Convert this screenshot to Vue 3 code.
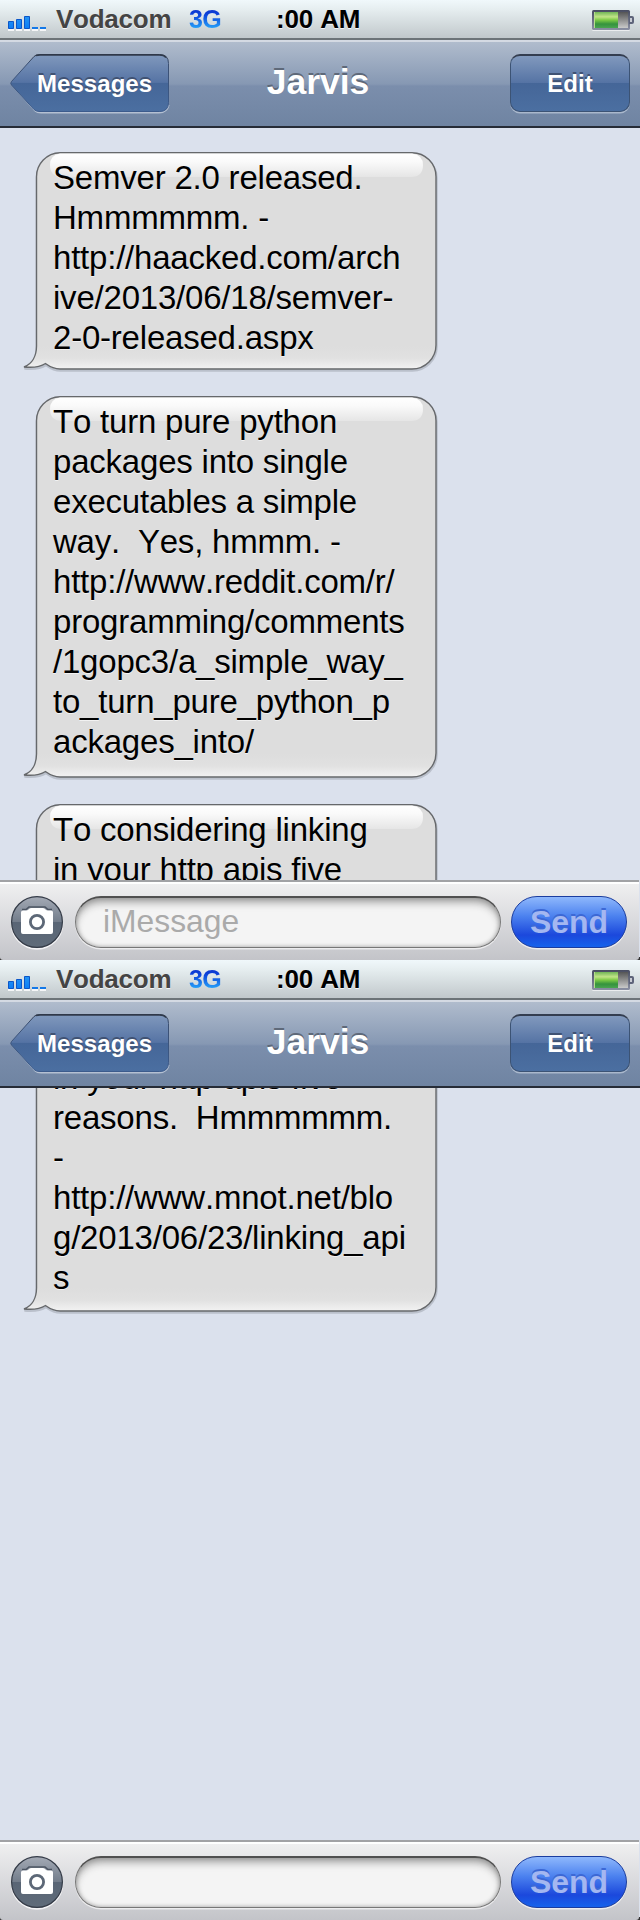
<script setup>
const semver = {
  height: 218,
  lines: ['Semver 2.0 released.', 'Hmmmmmm. -', 'http://haacked.com/arch', 'ive/2013/06/18/semver-', '2-0-released.aspx'],
}
const python = {
  height: 382,
  lines: [
    'To turn pure python',
    'packages into single',
    'executables a simple',
    'way.  Yes, hmmm. -',
    'http://www.reddit.com/r/',
    'programming/comments',
    '/1gopc3/a_simple_way_',
    'to_turn_pure_python_p',
    'ackages_into/',
  ],
}
// The long message is split over both screens: each one lists the lines it can show
const linkingStart = {
  height: 300,
  lines: ['To considering linking', 'in your http apis five'],
}
const linkingEnd = {
  height: 300,
  lines: [
    'in your http apis five',
    'reasons.  Hmmmmmm.',
    '-',
    'http://www.mnot.net/blo',
    'g/2013/06/23/linking_api',
    's',
  ],
}

const screens = [
  { id: 'a', messages: [semver, python, linkingStart], placeholder: 'iMessage', scrolled: false },
  { id: 'b', messages: [linkingEnd], placeholder: '', scrolled: true },
]

// Bubble outline with the tail at the lower left
function outline(h) {
  return `M40 .7 H392 A24 24 0 0 1 416 25 V${h - 25} A24 24 0 0 1 392 ${h - 1} H40 C33 ${h - 1} 29 ${h - 4} 25.5 ${h - 6.5} C21 ${h - 3.5} 14 ${h - 2} 4 ${h - 3} C12 ${h - 6} 16.5 ${h - 14} 16.5 ${h - 24} V25 A24 24 0 0 1 40 .7 Z`
}
</script>

<template>
  <main class="page">
    <section v-for="s in screens" :key="s.id" class="screen">
      <header class="status">
        <svg class="signal" width="40" height="20" viewBox="0 0 40 20">
          <defs>
            <linearGradient :id="'sig' + s.id" x1="0" y1="0" x2="0" y2="1">
              <stop offset="0" stop-color="#2494f4" /><stop offset="1" stop-color="#0c7df5" />
            </linearGradient>
          </defs>
          <path d="M0 16h6v2H0zM8 16h6v2H8zM16 16h6v2H16zM24 16h6v2H24zM32 16h6v2H32z" fill="#fff" opacity=".8" />
          <g :fill="`url(#sig${s.id})`" stroke="#0b56c8">
            <path d="M.5 8.500h5v7H.5zM8.500 6.500h5v9h-5zM16.500 3.500h5v12h-5z" />
          </g>
          <path d="M24 14h6v2H24zM32 14h6v2H32z" fill="#1479e8" />
        </svg>
        <span class="carrier">Vodacom</span>
        <span class="network">3G</span>
        <span class="clock">:00 AM</span>
        <svg class="battery" width="44" height="24" viewBox="0 0 44 24">
          <defs>
            <linearGradient :id="'cell' + s.id" x1="0" y1="0" x2="0" y2="1">
              <stop offset="0" stop-color="#71b657" /><stop offset=".3" stop-color="#c1e487" />
              <stop offset=".5" stop-color="#7cca45" /><stop offset=".75" stop-color="#35933d" /><stop offset="1" stop-color="#49a451" />
            </linearGradient>
            <linearGradient :id="'void' + s.id" x1="0" y1="0" x2="0" y2="1">
              <stop offset="0" stop-color="#555" /><stop offset="1" stop-color="#c9c9c9" />
            </linearGradient>
            <linearGradient :id="'case' + s.id" x1="0" y1="0" x2="0" y2="1">
              <stop offset="0" stop-color="#484c60" /><stop offset="1" stop-color="#8b90a3" />
            </linearGradient>
          </defs>
          <rect x="0" y="2" width="38" height="20" rx="1.500" fill="#fff" opacity=".6" />
          <rect x="0" y="1" width="38" height="20" rx="1.500" :fill="`url(#case${s.id})`" />
          <path d="M37 7h3q2 0 2 2v4q0 2-2 2h-3z" fill="#5e647a" />
          <path d="M38 9h2v4h-2z" fill="#c9ccd4" />
          <rect x="2" y="3" width="24" height="16" :fill="`url(#cell${s.id})`" />
          <path d="M2.500 3v16" stroke="#b5dd8c" />
          <rect x="26" y="3" width="10" height="16" :fill="`url(#void${s.id})`" />
        </svg>
      </header>

      <nav class="nav">
        <div class="back">
          <svg class="back-shape" width="162" height="64" viewBox="0 0 162 64">
            <defs>
              <linearGradient :id="'btn' + s.id" x1="0" y1="0" x2="0" y2="1">
                <stop offset="0" stop-color="#8199bd" /><stop offset=".49" stop-color="#5573a4" />
                <stop offset=".5" stop-color="#456698" /><stop offset="1" stop-color="#4b6fa1" />
              </linearGradient>
              <linearGradient :id="'edge' + s.id" x1="0" y1="0" x2="0" y2="1">
                <stop offset="0" stop-color="#303a4b" /><stop offset=".15" stop-color="#3c5072" /><stop offset="1" stop-color="#3c5b8c" />
              </linearGradient>
            </defs>
            <path d="M2 30.500L25 56.700Q27 58.700 31 58.700H149Q157 58.700 159 51" fill="none" stroke="#b4c0d2" stroke-width="1.400" />
            <path d="M24 2.500Q26 .5 30 .5H149.500Q158.500 .5 158.500 9.500V48.500Q158.500 57.500 149.500 57.500H30Q26 57.500 24 55.500L1.500 31Q0 29.500 1.500 27.500Z" :fill="`url(#btn${s.id})`" :stroke="`url(#edge${s.id})`" />
            <path d="M26 1.500Q28 1 30 1H149.500Q154 1 156 3.500" fill="none" stroke="#303a4b" stroke-width="1.500" />
          </svg>
          <span class="back-label">Messages</span>
        </div>
        <h1 class="title">Jarvis</h1>
        <div class="edit">Edit</div>
      </nav>

      <div class="feed">
        <div class="thread" :class="{ scrolled: s.scrolled }">
          <article v-for="(m, i) in s.messages" :key="i" class="bubble" :style="{ height: m.height + 'px' }">
            <svg class="bubble-shape" width="424" :height="m.height + 6" :viewBox="`0 0 424 ${m.height + 6}`">
              <defs>
                <linearGradient :id="`body${s.id}${i}`" gradientUnits="userSpaceOnUse" x1="0" :y1="m.height - 24" x2="0" :y2="m.height">
                  <stop offset="0" stop-color="#ddd" /><stop offset=".5" stop-color="#e1e1e1" /><stop offset="1" stop-color="#f4f4f4" />
                </linearGradient>
                <linearGradient :id="`gloss${s.id}${i}`" x1="0" y1="0" x2="0" y2="1">
                  <stop offset="0" stop-color="#fff" /><stop offset=".35" stop-color="#fff" stop-opacity=".85" /><stop offset="1" stop-color="#fff" stop-opacity=".25" />
                </linearGradient>
              </defs>
              <path :d="outline(m.height)" transform="translate(0.5 1.5)" fill="none" stroke="#8a8f99" stroke-opacity=".4" stroke-width="2.500" />
              <path :d="outline(m.height)" :fill="`url(#body${s.id}${i})`" stroke="#66686b" stroke-width="1.400" />
              <path d="M40 1.500H392Q403 3 403 13Q403 25 391 25H42Q30 25 30 13Q30 3 40 1.500Z" :fill="`url(#gloss${s.id}${i})`" />
            </svg>
            <div class="text"><div v-for="(line, n) in m.lines" :key="n">{{ line }}</div></div>
          </article>
        </div>
      </div>

      <footer class="composer">
        <svg class="camera" width="54" height="56" viewBox="0 0 54 56">
          <defs>
            <linearGradient :id="'cam' + s.id" x1="0" y1="0" x2="0" y2="1">
              <stop offset="0" stop-color="#a4aab5" /><stop offset=".49" stop-color="#737d8b" />
              <stop offset=".5" stop-color="#596575" /><stop offset="1" stop-color="#5f6b79" />
            </linearGradient>
          </defs>
          <circle cx="26" cy="27.500" r="25.500" fill="none" stroke="#f3f3f5" stroke-width="1.500" />
          <circle cx="26" cy="26" r="25.400" :fill="`url(#cam${s.id})`" stroke="#343b47" stroke-width="1.200" />
          <path d="M11 13.500H15L18 11H34L37 13.500H41" fill="none" stroke="#4c5563" stroke-width="1.500" />
          <path d="M12 14.500H15Q16.500 14.500 17.500 13.500L18 13Q19 12 20.500 12H31.500Q33 12 34 13L34.500 13.500Q35.500 14.500 37 14.500H40Q42 14.500 42 16.500V36Q42 38 40 38H12Q10 38 10 36V16.500Q10 14.500 12 14.500Z" fill="#fff" />
          <circle cx="26" cy="26" r="6.600" fill="#fff" stroke="#5d6877" stroke-width="2.800" />
        </svg>
        <div class="field">{{ s.placeholder }}</div>
        <div class="send">Send</div>
      </footer>
    </section>
  </main>
</template>

<style>
body {
  margin: 0;
}
</style>

<style scoped>
.page {
  width: 640px;
  font-family: 'Liberation Sans', Arial, sans-serif;
  font-kerning: none;
}
.screen {
  display: flex;
  flex-direction: column;
  width: 640px;
  height: 960px;
  overflow: hidden;
  background: linear-gradient(#dbe1ed 957px, #333 957px);
}
.status {
  box-sizing: border-box;
  display: flex;
  flex: none;
  height: 40px;
  padding-left: 8px;
  background: linear-gradient(#f0f8fb 0, #e5edef 10px, #c1c8cb 38px);
  border-bottom: 2px solid #6d7478;
  font-weight: bold;
  font-size: 26px;
  line-height: 38px;
  white-space: pre;
}
.signal {
  margin-top: 13px;
}
.carrier {
  width: 133px;
  margin-left: 8px;
  color: #444;
  letter-spacing: -0.25px;
  text-shadow: 0 1px #f4f6f7;
}
.network {
  width: 90px;
  color: transparent;
  font-size: 25px;
  letter-spacing: -0.7px;
  background: linear-gradient(#0c36cf 10px, #0d46dc 15px, #28a6fa 29px);
  -webkit-background-clip: text;
  background-clip: text;
}
.clock {
  width: 315px;
  margin-left: -3px;
  color: #000;
  letter-spacing: -0.15px;
  text-shadow: 0 1px #f4f6f7;
}
.battery {
  margin-top: 9px;
  margin-left: 1px;
}
.nav {
  box-sizing: border-box;
  display: flex;
  flex: none;
  height: 88px;
  padding: 12px 10px 0;
  background: linear-gradient(#b0bccd 0, #8698b3 42px, #7b8eac 44px, #6f84a2 84px);
  border-top: 2px solid #d4dae3;
  border-bottom: 2px solid #262c37;
  color: #fff;
  font-weight: bold;
}
.back {
  position: relative;
  width: 159px;
  height: 58px;
}
.back-shape {
  position: absolute;
  top: 0;
  left: 0;
}
.back-label {
  position: relative;
  display: block;
  padding-left: 27px;
  font-size: 24px;
  line-height: 60px;
  letter-spacing: 0.05px;
  text-shadow: 0 -2px #405273;
}
.title {
  width: 120px;
  margin: 0 0 0 89px;
  font-size: 35.5px;
  line-height: 57px;
  text-align: center;
  text-shadow: 0 -2px #5e6979;
}
.edit {
  box-sizing: border-box;
  width: 120px;
  height: 58px;
  margin-left: auto;
  border: 1px solid #3c5374;
  border-top: 2px solid #343e50;
  border-radius: 10px;
  background: linear-gradient(#8199bd, #5573a4 49%, #456698 50%, #4b6fa1);
  box-shadow: 0 1.5px #aab8cc;
  font-size: 24px;
  line-height: 55px;
  text-align: center;
  text-shadow: 0 -2px #405273;
}
.feed {
  flex: 1;
  overflow: hidden;
}
.thread {
  display: flex;
  flex-direction: column;
  gap: 26px;
  padding: 24px 0 0 20px;
}
.thread.scrolled {
  margin-top: -100px;
}
.bubble {
  position: relative;
  flex: none;
}
.bubble-shape {
  position: absolute;
  top: 0;
  left: 0;
}
.text {
  position: relative;
  padding: 6px 0 0 33px;
  color: #000;
  font-size: 33px;
  line-height: 40px;
  letter-spacing: -0.21px;
  white-space: pre;
  text-shadow: 0 1px #f2f2f2;
}
.scrolled .text {
  padding-top: 46px;
}
.composer {
  box-sizing: border-box;
  display: flex;
  flex: none;
  width: 639px;
  height: 80px;
  padding: 14px 0 0 11px;
  border-top: 2px solid #a1a2a5;
  background: linear-gradient(#fff 2px, #efeff0 2px, #c3c4c9);
  border-radius: 0 0 3px 3px;
}
.camera {
  flex: none;
}
.field {
  box-sizing: border-box;
  width: 426px;
  height: 52px;
  margin-left: 10px;
  padding-left: 27px;
  border: 1px solid #777;
  border-top: 2px solid #505050;
  border-radius: 26px;
  background: #f4f4f4;
  box-shadow: inset 0 6px 8px -2px #9a9a9a, inset 0 0 4px #999, 0 1.5px #ececee;
  color: #aaa;
  font-size: 31.8px;
  line-height: 47px;
}
.send {
  box-sizing: border-box;
  width: 116px;
  height: 52px;
  margin-left: 10px;
  border: 1px solid #1b3d9f;
  border-radius: 26px;
  background: linear-gradient(#8fb8fc, #4c82ef 38%, #1b48dc 76%, #1763ec);
  box-shadow: 0 1.5px #ececee;
  color: #a4b7f1;
  font-size: 32px;
  font-weight: bold;
  line-height: 51px;
  text-align: center;
  text-shadow: 0 -2px #3c68d5;
}
</style>
